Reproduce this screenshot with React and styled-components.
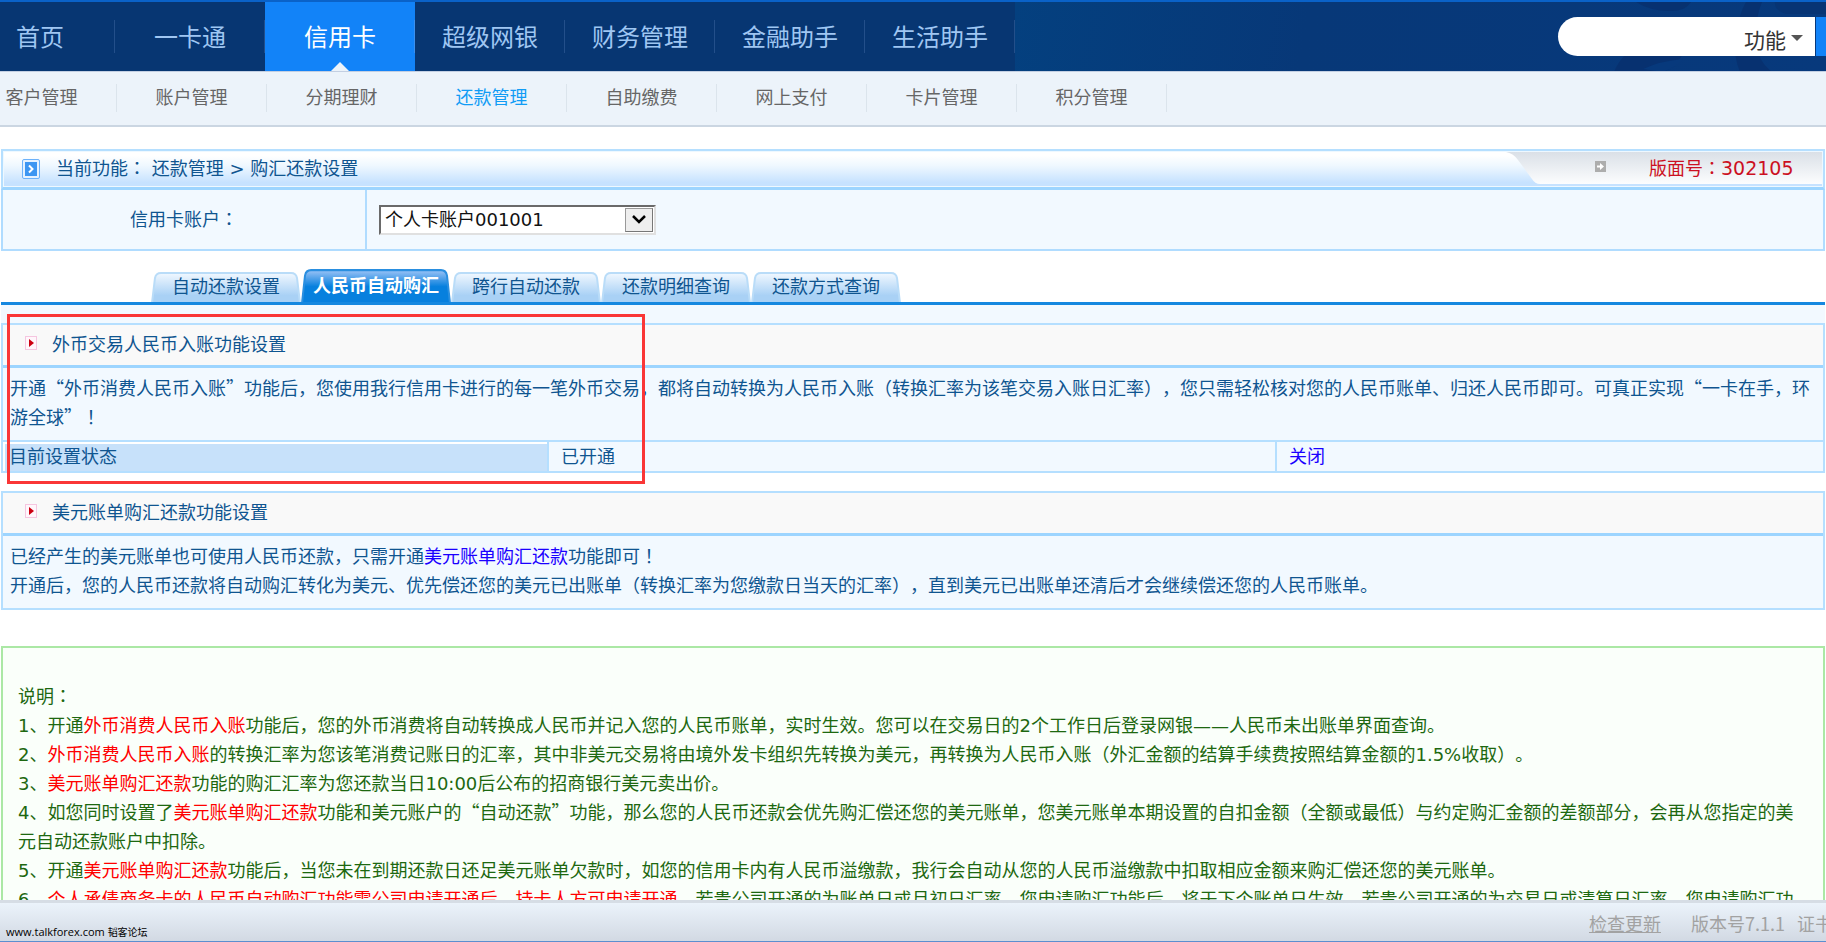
import React from "react";
import styled, { createGlobalStyle } from "styled-components";

const cjk = `"Noto Sans CJK SC", "Liberation Sans", sans-serif`;

const GlobalStyle = createGlobalStyle`
  * { box-sizing: border-box; }
  html, body, #root { height: 100%; }
  body {
    margin: 0;
    overflow: hidden;
    background: #fff;
    font: 18px/29px ${cjk};
    text-spacing-trim: space-all;
    color: #0f5590;
  }
  p, h2 { margin: 0; font-size: inherit; font-weight: inherit; }
  a { text-decoration: none; color: inherit; }
`;

const Page = styled.div`
  height: 100%;
  display: flex;
  flex-direction: column;
`;

/* ---------- header ---------- */
const Header = styled.header`
  position: relative;
  flex: none;
  display: flex;
  justify-content: space-between;
  height: 72px;
  overflow: hidden;
  border-top: 2px solid #0a62c8;
  border-bottom: 1px solid #c3cfe2;
  background: linear-gradient(100deg, #04407f, #073878 36%, #07397c) right / calc(100% - 1015px) 100% no-repeat #073672;
`;
const Petals = styled.svg`
  position: absolute;
  right: 0;
  top: 0;
  width: 280px;
  height: 70px;
`;
const MainNav = styled.nav`
  display: flex;
  margin-left: -35px;
`;
const MainLink = styled.a`
  position: relative;
  width: 150px;
  display: flex;
  align-items: center;
  justify-content: center;
  padding-bottom: 3px;
  font-size: 24px;
  color: ${(p) => (p.$active ? "#fff" : "#9fc6f2")};
  background: ${(p) => (p.$active ? "#1283f8" : "transparent")};
  &::after {
    content: "";
    position: absolute;
    right: 0;
    top: 18px;
    height: 33px;
    border-right: 1px solid ${(p) => (p.$active ? "#3a90f0" : "#234f8a")};
  }
`;
const Pointer = styled.span`
  position: absolute;
  bottom: 0;
  left: 66px;
  border: 9px solid transparent;
  border-top: 0;
  border-bottom-color: #ecf3fa;
`;
const Search = styled.div`
  position: relative;
  display: flex;
  height: 39px;
  margin-top: 15px;
`;
const SearchBox = styled.div`
  width: 257px;
  display: flex;
  align-items: center;
  padding: 4px 12px 0 20px;
  background: #fff;
  border-radius: 20px 0 0 20px;
`;
const SearchInput = styled.input`
  flex: 1;
  min-width: 0;
  border: 0;
  outline: 0;
  background: none;
  font: inherit;
`;
const ScopeButton = styled.button`
  display: flex;
  align-items: center;
  gap: 5px;
  padding: 2px 0 0;
  border: 0;
  background: none;
  font: 21px/29px ${cjk};
  color: #333;
`;
const Caret = styled.span`
  border: 6px solid transparent;
  border-top-color: #555;
  border-bottom: 0;
  margin-bottom: 4px;
`;
const SearchButton = styled.button`
  width: 10px;
  margin-left: 1px;
  padding: 0;
  border: 0;
  background: #1283f8;
`;

const SubNav = styled.nav`
  flex: none;
  display: flex;
  height: 55px;
  margin-bottom: 22px;
  background: #ecf3fa;
  border-bottom: 2px solid #cbd6e2;
`;
const SubLink = styled.a`
  flex: none;
  width: 150px;
  height: 28px;
  margin: 12px 0;
  padding-bottom: 4px;
  display: flex;
  align-items: center;
  justify-content: center;
  color: ${(p) => (p.$active ? "#109cf5" : "#666")};
  border-right: 1px solid #dbe4ec;
  &:first-child { margin-left: -33px; }
`;

/* ---------- content ---------- */
const Main = styled.main`
  flex: 1;
  min-height: 0;
  overflow: hidden;
  padding: 0 1px;
`;
const Latin = styled.span`
  font-family: "DejaVu Sans", ${cjk};
  font-size: ${(p) => (p.$large ? "19px" : "inherit")};
  line-height: 1;
`;
/* full-width punctuation centred in its cell */
const Mid = styled.span`
  font-family: "Noto Sans CJK TC", ${cjk};
  line-height: 1;
`;
const Crumbs = styled.div`
  display: flex;
  justify-content: space-between;
  height: 41px;
  border: 2px solid #b5dfff;
  border-bottom: 3px solid #9dd5ff;
  padding: 1px;
  background: linear-gradient(#fff 10%, #eff8ff 40%, #c6e2ff 90%, #c6e2ff) content-box, #eef8ff;
`;
const CrumbPath = styled.div`
  display: flex;
  align-items: center;
  padding-left: 18px;
  svg { margin-right: 16px; }
`;
const CrumbText = styled.span`
  padding-bottom: 3px;
`;
const CrumbSide = styled.div`
  position: relative;
  width: 316px;
  display: flex;
  align-items: center;
  padding-left: 89px;
  color: #cc1022;
`;
const SideShape = styled.svg`
  position: absolute;
  inset: 0;
  width: 100%;
  height: 32px;
`;
const SideIcon = styled.svg`
  position: relative;
  margin: 0 43px 5px 0;
`;
const SideText = styled.span`
  position: relative;
  padding-bottom: 3px;
`;
const AccountRow = styled.div`
  display: flex;
  height: 61px;
  border: 2px solid #b0dcff;
  border-top: 0;
  background: #f2f9ff;
`;
const AccountLabel = styled.label`
  width: 20%;
  display: flex;
  align-items: center;
  justify-content: center;
  padding-bottom: 3px;
  border-right: 2px solid #b0dcff;
`;
const AccountField = styled.div`
  display: flex;
  align-items: center;
  padding-left: 12px;
`;
const SelectFrame = styled.div`
  position: relative;
  display: flex;
  width: 277px;
  height: 30px;
  border: 2px solid;
  border-color: #6a6a6a #e0e0e0 #e0e0e0 #6a6a6a;
  background: #fff;
`;
const Select = styled.select`
  flex: 1;
  appearance: none;
  border: 0;
  outline: 0;
  padding: 0 0 0 4px;
  background: transparent;
  color: #111;
  font: 18px/26px "DejaVu Sans", ${cjk};
`;
const SelectArrow = styled.span`
  position: absolute;
  right: 1px;
  top: 1px;
  width: 28px;
  height: 24px;
  display: grid;
  place-items: center;
  border: 1px solid;
  border-color: #999 #777 #777 #999;
  background: #eee;
  pointer-events: none;
`;
const Tabs = styled.div`
  display: flex;
  align-items: flex-end;
  height: 54px;
  padding-left: 150px;
  border-bottom: 3px solid #1588e0;
`;
const Tab = styled.button`
  position: relative;
  width: 150px;
  height: ${(p) => (p.$active ? 33 : 30)}px;
  padding: 0 0 4px;
  border: 0;
  background: none;
  font: ${(p) => (p.$active ? "bold" : "normal")} 18px/26px ${cjk};
  color: ${(p) => (p.$active ? "#fff" : "#0f5590")};
  white-space: nowrap;
  span { position: relative; }
  svg { position: absolute; inset: 0; width: 100%; height: 100%; }
`;
const TabSpace = styled.div`
  height: 18px;
  background: #f2f9ff;
`;
const Panel = styled.section`
  border: 2px solid #b5dfff;
  background: #f2f9ff;
  margin-bottom: ${(p) => p.$gap}px;
`;
const PanelTitle = styled.h2`
  height: 43px;
  display: flex;
  align-items: center;
  gap: 15px;
  padding: 0 0 4px 22px;
  background: #f9f9f9;
  border-bottom: 3px solid #9dd5ff;
`;
const PanelText = styled.div`
  padding: 5px 7px 9px;
`;
const BlueLink = styled.a`
  color: #1a00ff;
`;
const StatusTable = styled.table`
  width: 100%;
  table-layout: fixed;
  border-collapse: separate;
  border-spacing: 0;
  border-top: 2px solid #b5dfff;
`;
const StatusCell = styled.td`
  width: ${(p) => p.$width};
  height: 29px;
  line-height: 26px;
  vertical-align: top;
  padding: 0 0 0 ${(p) => (p.$head ? 6 : 12)}px;
  background: ${(p) => (p.$head ? "#c7e1fa" : "transparent")};
  border-right: 2px solid #b5dfff;
  box-shadow: ${(p) => (p.$head ? "inset 2px 2px #fff" : "none")};
  &:last-child { border-right: 0; }
`;
const Marked = styled.div`
  position: relative;
`;
const MarkFrame = styled.div`
  position: absolute;
  z-index: 1;
  left: 6px;
  top: -9px;
  width: 638px;
  height: 170px;
  border: 3px solid #fa3636;
  pointer-events: none;
`;
const Notes = styled.section`
  border: 2px solid #abe8a5;
  background: #fafffa;
  padding: 33px 15px 40px;
  color: #1d6810;
`;
const Hot = styled.span`
  color: #f00;
`;

/* ---------- footer ---------- */
const Footer = styled.footer`
  flex: none;
  display: flex;
  justify-content: space-between;
  height: 42px;
  overflow: hidden;
  border-top: 3px solid #d6dde5;
  border-bottom: 1px solid #5c8fcf;
  background: linear-gradient(#ebf3fb, #d2d9e3);
  color: #a2a2a2;
`;
const Site = styled.div`
  align-self: flex-end;
  padding-left: 6px;
  font: 11px/18px "Open Sans", ${cjk};
  color: #000;
  span { font-size: 10px; }
`;
const FooterInfo = styled.div`
  display: flex;
  align-items: center;
  width: 237px;
  white-space: nowrap;
  padding-top: 2px;
  a { text-decoration: underline; margin-right: 30px; }
  span { margin-right: 12px; }
`;

const mainItems = ["首页", "一卡通", "信用卡", "超级网银", "财务管理", "金融助手", "生活助手"];
const subItems = ["客户管理", "账户管理", "分期理财", "还款管理", "自助缴费", "网上支付", "卡片管理", "积分管理"];
const tabItems = ["自动还款设置", "人民币自动购汇", "跨行自动还款", "还款明细查询", "还款方式查询"];

function TabShape({ active }) {
  const id = active ? "tabOn" : "tabOff";
  const top = active ? "#9cc3f6" : "#f1f8ff";
  const end = active ? "#0780de" : "#a9d1f5";
  const line = active ? "#2a8fe0" : "#b9dcf8";
  return (
    <svg viewBox="0 0 150 30" preserveAspectRatio="none" aria-hidden="true">
      <defs>
        <linearGradient id={id} x1="0" y1="0" x2="0" y2="1">
          <stop offset="0" stopColor={top} />
          <stop offset={active ? "0.5" : "0.75"} stopColor={end} />
        </linearGradient>
      </defs>
      <path d="M1 31 L4 6 Q5 1 10 1 H140 Q145 1 146 6 L149 31Z" fill={`url(#${id})`} stroke={line} strokeWidth="2" />
    </svg>
  );
}

function Bullet() {
  return (
    <svg width="12" height="14" viewBox="0 0 12 14" aria-hidden="true">
      <rect x="0.5" y="0.5" width="11" height="13" fill="#fff6fb" stroke="#f5c6e0" />
      <path d="M4 3 L9 7 L4 11Z" fill="#cc0010" />
    </svg>
  );
}

export default function App() {
  return (
    <Page>
      <GlobalStyle />
      <Header>
        <Petals viewBox="0 0 280 70" aria-hidden="true">
          <g fill="#073170">
            <path d="M90 0 H145 Q140 9 124 9 Q104 9 90 0Z" />
            <path d="M200 0 H216 Q208 20 210 40 Q212 60 226 70 H194 Q186 50 190 30 Q194 10 200 0Z" />
            <path d="M229 0 H280 V12 H240 Q228 8 229 0Z" fill="#073474" />
            <path d="M68 70 Q72 60 80 52 H137 Q130 64 118 70Z" />
          </g>
          <path d="M97 67 Q114 59 137 57 Q130 66 116 70Z" fill="#07397c" />
        </Petals>
        <MainNav>
          {mainItems.map((t, i) => (
            <MainLink key={t} href="#" $active={i === 2}>
              {t}
              {i === 2 && <Pointer />}
            </MainLink>
          ))}
        </MainNav>
        <Search>
          <SearchBox>
            <SearchInput aria-label="搜索" />
            <ScopeButton>功能<Caret /></ScopeButton>
          </SearchBox>
          <SearchButton aria-label="搜索" />
        </Search>
      </Header>
      <SubNav>
        {subItems.map((t, i) => (
          <SubLink key={t} href="#" $active={i === 3}>{t}</SubLink>
        ))}
      </SubNav>
      <Main>
        <Crumbs>
          <CrumbPath>
            <svg width="18" height="20" viewBox="0 0 18 20" aria-hidden="true">
              <rect x="0.5" y="0.5" width="17" height="19" rx="1.5" fill="#e6f2ff" stroke="#6db2fa" />
              <rect x="3" y="3" width="12" height="14" fill="#3d96f2" />
              <path d="M7 6.5 L10.5 10 L7 13.5" fill="none" stroke="#fff" strokeWidth="2" />
            </svg>
            <CrumbText>当前功能<Mid>：</Mid><Latin> </Latin>还款管理<Latin> &gt; </Latin>购汇还款设置</CrumbText>
          </CrumbPath>
          <CrumbSide>
            <SideShape viewBox="0 0 316 32" preserveAspectRatio="none" aria-hidden="true">
              <defs>
                <linearGradient id="side" x1="0" y1="0" x2="0" y2="1">
                  <stop offset="0" stopColor="#dae0e7" />
                  <stop offset="1" stopColor="#fcfdfe" />
                </linearGradient>
              </defs>
              <path d="M0 0 Q7 1 12 8 L26 27 Q29 32 34 32 H316 V0Z" fill="url(#side)" />
            </SideShape>
            <SideIcon width="11" height="11" viewBox="0 0 11 11" aria-hidden="true">
              <rect width="11" height="11" fill="#adadad" />
              <path d="M2 4.5 H5 V2 L9 5.5 L5 9 V6.5 H2Z" fill="#fff" />
            </SideIcon>
            <SideText>版面号<Mid>：</Mid><Latin $large>302105</Latin></SideText>
          </CrumbSide>
        </Crumbs>
        <AccountRow>
          <AccountLabel htmlFor="account"><span>信用卡账户<Mid>：</Mid></span></AccountLabel>
          <AccountField>
            <SelectFrame>
              <Select id="account" defaultValue="1">
                <option value="1">个人卡账户001001</option>
              </Select>
              <SelectArrow>
                <svg width="14" height="9" viewBox="0 0 14 9" aria-hidden="true">
                  <path d="M1 1 L7 7 L13 1" fill="none" stroke="#000" strokeWidth="2.5" />
                </svg>
              </SelectArrow>
            </SelectFrame>
          </AccountField>
        </AccountRow>
        <Tabs>
          {tabItems.map((t, i) => (
            <Tab key={t} $active={i === 1}>
              <TabShape active={i === 1} />
              <span>{t}</span>
            </Tab>
          ))}
        </Tabs>
        <TabSpace />
        <Marked>
          <MarkFrame />
          <Panel $gap={18}>
            <PanelTitle><Bullet />外币交易人民币入账功能设置</PanelTitle>
            <PanelText>
              开通“外币消费人民币入账”功能后，您使用我行信用卡进行的每一笔外币交易，都将自动转换为人民币入账（转换汇率为该笔交易入账日汇率），您只需轻松核对您的人民币账单、归还人民币即可。可真正实现“一卡在手，环游全球”<Mid>！</Mid>
            </PanelText>
            <StatusTable>
              <tbody>
                <tr>
                  <StatusCell $head $width="30%">目前设置状态</StatusCell>
                  <StatusCell $width="40%">已开通</StatusCell>
                  <StatusCell $width="30%"><BlueLink href="#">关闭</BlueLink></StatusCell>
                </tr>
              </tbody>
            </StatusTable>
          </Panel>
        </Marked>
        <Panel $gap={36}>
          <PanelTitle><Bullet />美元账单购汇还款功能设置</PanelTitle>
          <PanelText>
            <p>已经产生的美元账单也可使用人民币还款，只需开通<BlueLink href="#">美元账单购汇还款</BlueLink>功能即可<Mid>！</Mid></p>
            <p>开通后，您的人民币还款将自动购汇转化为美元、优先偿还您的美元已出账单（转换汇率为您缴款日当天的汇率），直到美元已出账单还清后才会继续偿还您的人民币账单。</p>
          </PanelText>
        </Panel>
        <Notes>
          <p>说明<Mid>：</Mid></p>
          <p><Latin>1</Latin>、开通<Hot>外币消费人民币入账</Hot>功能后，您的外币消费将自动转换成人民币并记入您的人民币账单，实时生效。您可以在交易日的<Latin>2</Latin>个工作日后登录网银<Latin>——</Latin>人民币未出账单界面查询。</p>
          <p><Latin>2</Latin>、<Hot>外币消费人民币入账</Hot>的转换汇率为您该笔消费记账日的汇率，其中非美元交易将由境外发卡组织先转换为美元，再转换为人民币入账（外汇金额的结算手续费按照结算金额的<Latin>1.5%</Latin>收取）。</p>
          <p><Latin>3</Latin>、<Hot>美元账单购汇还款</Hot>功能的购汇汇率为您还款当日<Latin>10:00</Latin>后公布的招商银行美元卖出价。</p>
          <p><Latin>4</Latin>、如您同时设置了<Hot>美元账单购汇还款</Hot>功能和美元账户的“自动还款”功能，那么您的人民币还款会优先购汇偿还您的美元账单，您美元账单本期设置的自扣金额（全额或最低）与约定购汇金额的差额部分，会再从您指定的美元自动还款账户中扣除。</p>
          <p><Latin>5</Latin>、开通<Hot>美元账单购汇还款</Hot>功能后，当您未在到期还款日还足美元账单欠款时，如您的信用卡内有人民币溢缴款，我行会自动从您的人民币溢缴款中扣取相应金额来购汇偿还您的美元账单。</p>
          <p><Latin>6</Latin>、<Hot>个人承债商务卡的人民币自动购汇功能需公司申请开通后，持卡人方可申请开通</Hot>。若贵公司开通的为账单日或月初日汇率，您申请购汇功能后，将于下个账单日生效，若贵公司开通的为交易日或清算日汇率，您申请购汇功</p>
        </Notes>
      </Main>
      <Footer>
        <Site>www.talkforex.com <span>韬客论坛</span></Site>
        <FooterInfo>
          <a href="#">检查更新</a>
          <span>版本号7.1.1</span>
          <span>证书</span>
        </FooterInfo>
      </Footer>
    </Page>
  );
}
